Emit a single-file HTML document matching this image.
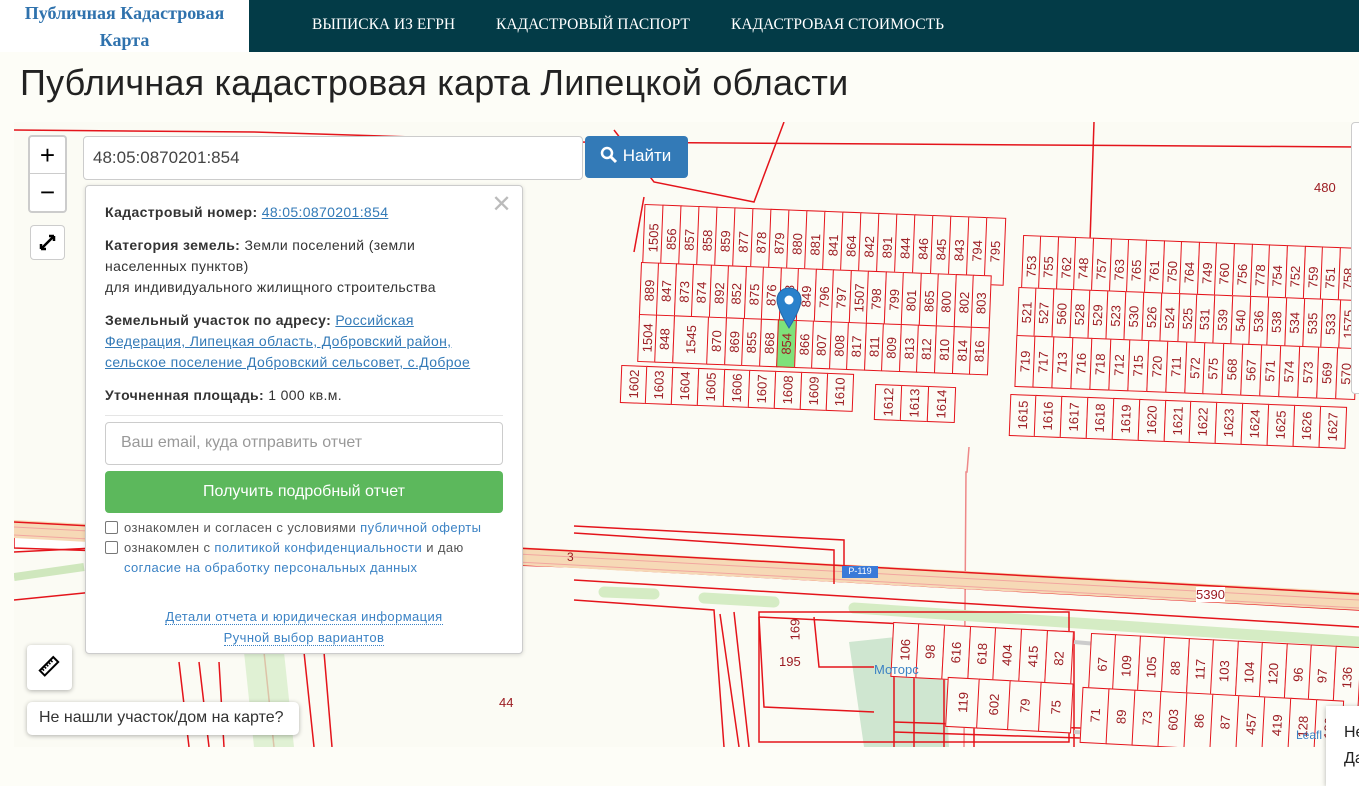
<!DOCTYPE html>
<html><head><meta charset="utf-8"><style>
*{box-sizing:border-box;margin:0;padding:0}
body{width:1359px;height:782px;overflow:hidden;background:#fdfdf7;font-family:"Liberation Sans",sans-serif;position:relative}
.hdr{position:absolute;left:0;top:0;width:1359px;height:52px;background:#033b47}
.logo{position:absolute;left:0;top:0;width:249px;height:52px;background:#fff;text-align:center;font-family:"Liberation Serif",serif;font-weight:bold;font-size:18px;color:#2f72ad;line-height:27px}
.nav{position:absolute;top:16px;font-family:"Liberation Serif",serif;font-size:15.5px;color:#fff}
h1{position:absolute;left:20px;top:62px;font-weight:normal;font-size:36px;color:#222;letter-spacing:.2px}
.map{position:absolute;left:14px;top:122px;width:1345px;height:625px;background:#fbfbf4;overflow:hidden}
.row{position:absolute;display:flex;transform-origin:0 0}
.row span{flex:1;border:1.5px solid #e4141b;margin-left:-1.5px;writing-mode:vertical-rl;transform:rotate(180deg);font-size:13px;color:#9c1c22;display:flex;align-items:center;justify-content:center;background:#fcfcf6}
.ctl{position:absolute;background:#fff;border:2px solid rgba(0,0,0,.2);border-radius:4px}
.pop{position:absolute;left:85px;top:185px;width:438px;height:469px;background:#fff;border:1px solid #ccc;border-radius:4px;box-shadow:0 1px 4px rgba(0,0,0,.15);font-size:14px;letter-spacing:.35px;color:#333;padding:16px 19px;white-space:nowrap}
.pop p{margin-bottom:12px;line-height:21px}
.pop a{color:#337ab7;text-decoration:underline}
b{font-weight:bold}
.chk{font-size:13px;letter-spacing:.4px;color:#555;line-height:20px;display:flex;gap:6px}
.chk i{display:inline-block;width:13px;height:13px;border:1px solid #777;border-radius:2px;margin-top:3px;flex:none}
.bl{color:#3b82c4}
</style></head><body>
<div class="hdr">
<div class="logo">Публичная Кадастровая<br>Карта</div>
<div class="nav" style="left:312px">ВЫПИСКА ИЗ ЕГРН</div>
<div class="nav" style="left:496px">КАДАСТРОВЫЙ ПАСПОРТ</div>
<div class="nav" style="left:731px">КАДАСТРОВАЯ СТОИМОСТЬ</div>
</div>
<h1>Публичная кадастровая карта Липецкой области</h1>

<div class="map">
<svg width="1345" height="625" style="position:absolute;left:0;top:0" fill="none" stroke="#e4141b" stroke-width="1.5">
<path d="M0 418 L80 410 L200 410 L560 435 L1345 480" stroke-width="1.5"/>
<path d="M0 8 L240 10 L560 20 L1345 25" stroke-width="1.5"/>
<path d="M600 8 L640 60 L740 80 L770 0"/>
<path d="M630 75 L620 130"/>
<path d="M1080 0 L1075 150"/>
<path d="M955 325 L953 350 L952 350 L950 625" stroke="#e88"/>
<polygon points="0,414 560,432 1345,478 1345,488 560,445 0,426" fill="#fff"/>
<polygon points="0,398 560,428 1345,470 1345,488 560,446 0,416" fill="#f6d9b6" stroke="none"/>
<path d="M0 400 L560 429 L1345 472" stroke-width="1.5"/>
<path d="M0 413 L560 443 L1345 486" stroke="#f2a6a0" stroke-width="1"/>
<path d="M0 405 L560 435 L1345 478" stroke="#f2a6a0" stroke-width="1"/>
<path d="M560 458 L1345 505" stroke-width="1.5"/>
<path d="M0 430 L80 426" />
<path d="M0 478 L80 470"/>
<path d="M0 455 L70 445" stroke="#cfe7bd" stroke-width="8"/>
<path d="M590 470 L640 472 M690 476 L760 480 M840 486 L1345 520" stroke="#d5ecc4" stroke-width="11" stroke-linecap="round"/>
<path d="M560 404 L830 418 L830 455 M560 411 L820 428 L820 462"/>
<path d="M560 478 L700 488 L710 625 M720 490 L735 625 M706 492 L725 625"/>
<path d="M835 490 L835 520 L930 510 L935 625 L850 625 L835 520 Z" fill="#cfe6d0" stroke="none"/>
<path d="M745 495 L1060 510 L1060 625 M745 495 L750 585 L860 590 M800 495 L805 545 L860 545 M880 500 L880 625 M900 505 L900 625 M930 505 L930 625 M960 505 L960 625"/>
<rect x="745" y="490" width="310" height="130" fill="none"/>
<path d="M1060 520 L1345 545 M1060 610 L1345 625" stroke="#ccc" stroke-width="4"/>
<path d="M165 540 L175 625 M185 540 L195 625 M205 540 L210 625 M250 530 L260 625 M290 530 L300 625 M310 530 L318 625" />
<path d="M230 530 L240 625 L280 625 L270 530Z" fill="#d9efcc" stroke="none" opacity=".8"/>
<path d="M880 610 L1345 625 M880 600 L1345 615"/>
</svg>

<div class="row" style="left:1078px;top:511px;width:270px;height:62px;transform:rotate(3deg)"><span>67</span><span>109</span><span>105</span><span>88</span><span>117</span><span>103</span><span>104</span><span>120</span><span>96</span><span>97</span><span>136</span></div>
<div class="row" style="left:1070px;top:565px;width:260px;height:56px;transform:rotate(3deg)"><span>71</span><span>89</span><span>73</span><span>603</span><span>86</span><span>87</span><span>457</span><span>419</span><span>128</span><span>129</span></div>
<div class="row" style="left:880px;top:500px;width:180px;height:55px;transform:rotate(3deg)"><span>106</span><span>98</span><span>616</span><span>618</span><span>404</span><span>415</span><span>82</span></div>
<div class="row" style="left:935px;top:555px;width:125px;height:50px;transform:rotate(3deg)"><span>119</span><span>602</span><span>79</span><span>75</span></div>
<div style="position:absolute;left:770px;top:500px;font-size:13px;color:#9c1c22;transform:rotate(-90deg)">169</div>
<div style="position:absolute;left:765px;top:532px;font-size:13px;color:#9c1c22">195</div>
<div style="position:absolute;left:860px;top:540px;font-size:13px;color:#3b82c4">Моторс</div>
<div style="position:absolute;left:485px;top:573px;font-size:13px;color:#9c1c22">44</div>
<div style="position:absolute;left:1182px;top:465px;font-size:13px;color:#9c1c22;background:#fff">5390</div>
<div style="position:absolute;left:553px;top:428px;font-size:12px;color:#9c1c22">3</div>
<div style="position:absolute;left:828px;top:444px;width:36px;height:12px;background:#3a7ad8;font-size:9px;color:#fff;text-align:center">Р-119</div>
<div style="position:absolute;left:1300px;top:58px;font-size:13px;color:#9c1c22">480</div>

<div class="row" style="left:632px;top:82px;width:360px;height:68px;transform:rotate(2.2deg)"><span>1505</span><span>856</span><span>857</span><span>858</span><span>859</span><span>877</span><span>878</span><span>879</span><span>880</span><span>881</span><span>841</span><span>864</span><span>842</span><span>891</span><span>844</span><span>846</span><span>845</span><span>843</span><span>794</span><span>795</span></div>
<div class="row" style="left:1010px;top:113px;width:335px;height:62px;transform:rotate(2.2deg)"><span>753</span><span>755</span><span>762</span><span>748</span><span>757</span><span>763</span><span>765</span><span>761</span><span>750</span><span>764</span><span>749</span><span>760</span><span>756</span><span>778</span><span>754</span><span>752</span><span>759</span><span>751</span><span>758</span></div>
<div class="row" style="left:628px;top:140px;width:350px;height:56px;transform:rotate(2.2deg)"><span>889</span><span>847</span><span>873</span><span>874</span><span>892</span><span>852</span><span>875</span><span>876</span><span>878</span><span>849</span><span>796</span><span>797</span><span>1507</span><span>798</span><span>799</span><span>801</span><span>865</span><span>800</span><span>802</span><span>803</span></div>
<div class="row" style="left:626px;top:192px;width:350px;height:48px;transform:rotate(2.2deg)"><span>1504</span><span>848</span><span style="flex:2">1545</span><span>870</span><span>869</span><span>855</span><span>868</span><span style="background:#7ee27a">854</span><span>866</span><span>807</span><span>808</span><span>817</span><span>811</span><span>809</span><span>813</span><span>812</span><span>810</span><span>814</span><span>816</span></div>
<div class="row" style="left:1005px;top:165px;width:340px;height:50px;transform:rotate(2.2deg)"><span>521</span><span>527</span><span>560</span><span>528</span><span>529</span><span>523</span><span>530</span><span>526</span><span>524</span><span>525</span><span>531</span><span>539</span><span>540</span><span>536</span><span>538</span><span>534</span><span>535</span><span>533</span><span>1575</span></div>
<div class="row" style="left:1003px;top:213px;width:340px;height:52px;transform:rotate(2.2deg)"><span>719</span><span>717</span><span>713</span><span>716</span><span>718</span><span>712</span><span>715</span><span>720</span><span>711</span><span>572</span><span>575</span><span>568</span><span>567</span><span>571</span><span>574</span><span>573</span><span>569</span><span>570</span></div>
<div class="row" style="left:608px;top:243px;width:232px;height:38px;transform:rotate(2.2deg)"><span>1602</span><span>1603</span><span>1604</span><span>1605</span><span>1606</span><span>1607</span><span>1608</span><span>1609</span><span>1610</span></div>
<div class="row" style="left:862px;top:262px;width:80px;height:36px;transform:rotate(2.2deg)"><span>1612</span><span>1613</span><span>1614</span></div>
<div class="row" style="left:997px;top:272px;width:336px;height:42px;transform:rotate(2.2deg)"><span>1615</span><span>1616</span><span>1617</span><span>1618</span><span>1619</span><span>1620</span><span>1621</span><span>1622</span><span>1623</span><span>1624</span><span>1625</span><span>1626</span><span>1627</span></div>

<svg style="position:absolute;left:762px;top:165px" width="26" height="42" viewBox="0 0 26 42"><path d="M13 1C6 1 1 6 1 13c0 9 12 28 12 28s12-19 12-28C25 6 20 1 13 1z" fill="#2a81cb" stroke="#2268a8"/><circle cx="13" cy="13" r="4.5" fill="#fff"/></svg>

<div style="position:absolute;left:1337px;top:0;width:12px;height:272px;background:#fff;border:1px solid #ccc;border-radius:4px"></div>
<div style="position:absolute;left:1282px;top:606px;font-size:12px;color:#3b82c4">Leafl</div>
</div>

<div class="ctl" style="left:28px;top:135px;width:39px;height:78px">
<div style="height:37px;border-bottom:1px solid #ccc;text-align:center;font-size:26px;line-height:36px;color:#000">+</div>
<div style="text-align:center;font-size:26px;line-height:36px;color:#000">−</div></div>
<div class="ctl" style="left:30px;top:225px;width:35px;height:35px;border-width:1px"><svg width="33" height="33" viewBox="0 0 33 33"><path d="M10 23 L23 10 M23 10 l-5 0 M23 10 l0 5 M10 23 l5 0 M10 23 l0 -5" stroke="#000" stroke-width="2.5" fill="none"/></svg></div>
<div class="ctl" style="left:27px;top:645px;width:45px;height:45px;border:none;box-shadow:0 1px 5px rgba(0,0,0,.3)"><svg width="45" height="45" viewBox="0 0 45 45"><g transform="rotate(-45 22 22)"><rect x="13" y="18" width="19" height="7" fill="none" stroke="#000" stroke-width="2"/><path d="M16 18v3M19 18v3M22 18v3M25 18v3M28 18v3" stroke="#000" stroke-width="1.5"/></g></svg></div>
<div style="position:absolute;left:27px;top:702px;width:272px;height:33px;background:#fff;border-radius:5px;box-shadow:0 1px 5px rgba(0,0,0,.3);font-size:16px;color:#333;padding:7px 12px">Не нашли участок/дом на карте?</div>
<div style="position:absolute;left:1326px;top:706px;width:40px;height:80px;background:#fff;box-shadow:0 1px 5px rgba(0,0,0,.3);font-size:16px;color:#222;padding:14px 18px;line-height:26px">Не Да</div>

<div style="position:absolute;left:83px;top:136px;width:500px;height:44px;background:#fff;border:1px solid #ccc;border-radius:4px;font-size:17px;color:#444;padding:11px 9px">48:05:0870201:854</div>
<div style="position:absolute;left:585px;top:136px;width:103px;height:42px;background:#337ab7;border-radius:4px;color:#fff;font-size:17px;padding:10px 0 0 15px"><svg width="18" height="18" viewBox="0 0 18 18" style="vertical-align:-3px"><circle cx="7" cy="7" r="5" stroke="#fff" stroke-width="2.5" fill="none"/><path d="M11 11l5 5" stroke="#fff" stroke-width="3"/></svg> Найти</div>

<div class="pop">
<div style="position:absolute;right:10px;top:4px;font-size:24px;color:#bbb">✕</div>
<p><b>Кадастровый номер:</b> <a>48:05:0870201:854</a></p>
<p><b>Категория земель:</b> Земли поселений (земли<br>населенных пунктов)<br>для индивидуального жилищного строительства</p>
<p><b>Земельный участок по адресу:</b> <a>Российская</a><br><a>Федерация, Липецкая область, Добровский район,</a><br><a>сельское поселение Добровский сельсовет, с.Доброе</a></p>
<p style="margin-bottom:9px"><b>Уточненная площадь:</b> 1 000 кв.м.</p>
<div style="border-top:1px solid #e5e5e5;margin-bottom:6px"></div>
<div style="height:43px;border:1px solid #ccc;border-radius:4px;font-size:16px;letter-spacing:0;color:#999;padding:11px 15px;margin-bottom:6px">Ваш email, куда отправить отчет</div>
<div style="height:42px;background:#5cb85c;border-radius:4px;color:#fff;font-size:16px;letter-spacing:0;text-align:center;line-height:41px;margin-bottom:5px">Получить подробный отчет</div>
<div class="chk"><i></i><span>ознакомлен и согласен с условиями <span class="bl">публичной оферты</span></span></div>
<div class="chk"><i></i><span>ознакомлен с <span class="bl">политикой конфиденциальности</span> и даю<br><span class="bl">согласие на обработку персональных данных</span></span></div>
<div style="text-align:center;margin-top:28px;font-size:13px;letter-spacing:.4px;line-height:21px;color:#3b82c4"><span style="border-bottom:1px dotted #3b82c4">Детали отчета и юридическая информация</span><br><span style="border-bottom:1px dotted #3b82c4">Ручной выбор вариантов</span></div>
</div>
</body></html>
